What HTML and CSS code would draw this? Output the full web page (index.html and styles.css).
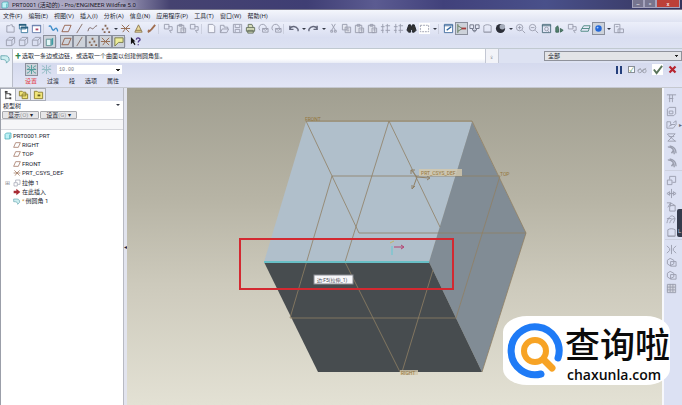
FILE: index.html
```html
<!DOCTYPE html>
<html lang="zh-CN">
<head>
    <meta charset="UTF-8">
    <meta name="viewport" content="width=device-width, initial-scale=1.0">
    <title>PRT0001 (活动的) - Pro/ENGINEER Wildfire 5.0</title>
    <link rel="stylesheet" href="styles.css">
</head>
<body>
    <svg class="sprite" aria-hidden="true">
        <symbol id="new" viewBox="0 0 12 12"><path d="M2 10V3h3l1-1h2v2h2v6z"/></symbol>
        <symbol id="window" viewBox="0 0 12 12"><path fill="#fff" stroke="#3c789c" d="M1.500 1.500h7v5h-7zM3.500 4.500h7v6h-7z"/><path fill="none" stroke="#2a6080" stroke-width="2" d="M1 2h8M3 5h8"/></symbol>
        <symbol id="close-win" viewBox="0 0 12 12"><path fill="#fff" stroke="#647aa8" d="M1.500 2.500h9v8h-9zM1 3h10"/><path stroke="#b04a6a" stroke-width="2" d="M5 7h3"/></symbol>
        <symbol id="sketch" viewBox="0 0 12 12"><path stroke="#3c8cc8" stroke-width="1.500" d="M1 4c3-4 3 7 6 3s3 2 4 2"/></symbol>
        <symbol id="plane" viewBox="0 0 12 12"><path stroke="#94604c" d="M1 9.500L4 2.500h7l-3 7z"/></symbol>
        <symbol id="axis" viewBox="0 0 12 12"><path stroke="#846c64" d="M3 11L9 1"/></symbol>
        <symbol id="curve" viewBox="0 0 12 12"><path stroke="#786460" d="M1 9c2-8 4-1 6-3s2-3 4-3"/></symbol>
        <symbol id="points" viewBox="0 0 12 12"><path stroke="#846450" stroke-width="2" d="M5 3h2M2 7h2M7 6h2M4 10h2M9 10h2"/></symbol>
        <symbol id="csys" viewBox="0 0 12 12"><path stroke="#94684c" d="M2 2l4 4 4-4M6 6H1M6 6l4 4M3 10l3-4h5"/></symbol>
        <symbol id="cone" viewBox="0 0 12 12"><path fill="#eadb9c" stroke="#8c7850" d="M6 2l4 8H2zM3 8h6"/></symbol>
        <symbol id="brush" viewBox="0 0 12 12"><path stroke="#a06e50" stroke-width="2" d="M2 10l4-3 4-5M2 8l3 1"/></symbol>
        <symbol id="copygeom" viewBox="0 0 12 12"><path d="M1.500 1.500h5v5h-5zM6 4h4v4H7M7 8l2 3"/></symbol>
        <symbol id="page" viewBox="0 0 12 12"><path fill="#f4f5fb" d="M2.500 1.500h5l2 2v7h-7z"/></symbol>
        <symbol id="folder" viewBox="0 0 12 12"><path d="M1.500 10.500v-8h4v2h4v2M1.500 10.500l2-4h7l-2 4z"/></symbol>
        <symbol id="save" viewBox="0 0 12 12"><path d="M1.500 1.500h9v9h-9zM3.500 2v3h5V2M3.500 10V7h5v3"/></symbol>
        <symbol id="print" viewBox="0 0 12 12"><path fill="#d9dfbe" stroke="#65715e" d="M3.500 5V1.500h4L9 5M1.500 5h9v4h-9zM3 8h6v3H3z"/></symbol>
        <symbol id="mail" viewBox="0 0 12 12"><path d="M2 8a4 4 0 1 1 7-2M5 6h6v4H5zM5 6l3 2 3-2"/></symbol>
        <symbol id="undo" viewBox="0 0 12 12"><path stroke="#64687c" stroke-width="1.500" d="M2 3v4h4M2 6c2-3 7-3 9 1v2"/></symbol>
        <symbol id="redo" viewBox="0 0 12 12"><path stroke="#64687c" stroke-width="1.500" d="M10 3v4H6M10 6c-2-3-7-3-9 1v2"/></symbol>
        <symbol id="cut" viewBox="0 0 12 12"><path d="M4 1l4 7M8 1L4 8M3 8h2v2H3zM7 8h2v2H7z"/></symbol>
        <symbol id="copy" viewBox="0 0 12 12"><path fill="#e6e8f1" d="M1.500 1.500h5v6h-5zM4.500 4.500h6v6h-6zM6 6.500h3M6 8.500h3"/></symbol>
        <symbol id="paste" viewBox="0 0 12 12"><path fill="#e1e4ee" d="M1.500 2.500h7v8h-7zM3.500 1.500h3v2h-3zM5.500 5.500h5v5h-5zM7 7.500h2"/></symbol>
        <symbol id="regen" viewBox="0 0 12 12"><path d="M3 1v10M8 1v10M1 4h4M6 3h5M1 8h3M6 8h5"/></symbol>
        <symbol id="find" viewBox="0 0 12 12"><path fill="#333" stroke="#20242c" d="M3 2h2l1 3 1-3h2l2 6-2 2H7V7H5v3H3L1 8z"/></symbol>
        <symbol id="select" viewBox="0 0 12 12"><path fill="#fff" stroke="none" d="M0 0h12v12H0z"/><path stroke-dasharray="2 1" d="M1.500 2.500h9v7h-9z"/></symbol>
        <symbol id="repaint" viewBox="0 0 12 12"><path fill="#fff" stroke="#416b9c" d="M1.500 1.500h9v9h-9zM1 3h10"/><path stroke="#2c65a0" stroke-width="1.500" d="M4 8l5-4"/></symbol>
        <symbol id="spin" viewBox="0 0 12 12"><path stroke="#607c5c" d="M2 1v10M2 3l5 3-5 3"/><path stroke="#a43c3c" stroke-width="2" d="M6 6h5"/></symbol>
        <symbol id="orient" viewBox="0 0 12 12"><path stroke="#6f7485" d="M1 2h4v4H1zM7 2h4v4H7zM3 6l3 4 3-4M4 8h4"/></symbol>
        <symbol id="shade" viewBox="0 0 12 12"><circle cx="6" cy="6" r="5" fill="#2b2e38" stroke="none"/><circle cx="8" cy="4" r="3" fill="#a6adbb" stroke="none"/></symbol>
        <symbol id="zoomin" viewBox="0 0 12 12"><circle cx="5" cy="5" r="3.500"/><path d="M3 5h4M5 3v4M8 8l3 3"/></symbol>
        <symbol id="zoomout" viewBox="0 0 12 12"><circle cx="5" cy="5" r="3.500"/><path d="M3 5h4M8 8l3 3"/></symbol>
        <symbol id="refit" viewBox="0 0 12 12"><path stroke="#4b6c7c" d="M1.500 1.500h9v9h-9zM1 3h10"/><circle cx="6" cy="6.500" r="2"/><path d="M7 8l2 2"/></symbol>
        <symbol id="reorient" viewBox="0 0 12 12"><path fill="#52836f" stroke="#3e6657" d="M2 10V5l2-2 1 3v4zM7 6l3 2-3 2z"/></symbol>
        <symbol id="layers" viewBox="0 0 12 12"><path stroke="#4c8880" d="M1 8l3-5h7l-2 6H1zM2 6h8"/></symbol>
        <symbol id="ball" viewBox="0 0 12 12"><circle cx="6" cy="6" r="3.500" fill="#2468d8" stroke="none"/><circle cx="5" cy="5" r="1" fill="#a7ccff" stroke="none"/></symbol>
        <symbol id="viewmgr" viewBox="0 0 12 12"><path d="M1.500 1.500h6v9h-6zM5.500 6.500h6v4h-6zM3 4h3"/></symbol>
        <symbol id="cube" viewBox="0 0 12 12"><path d="M1.500 4.500h6v6h-6zM1.500 4.500l3-3h6v6l-3 3M7.500 4.500l3-3"/></symbol>
        <symbol id="solid" viewBox="0 0 12 12"><path fill="#e2f6f6" stroke="#5c9094" d="M2.500 3.500h5v7h-5z"/><path fill="#3c9ba2" stroke="none" d="M8 3l2-1v7l-2 2z"/></symbol>
        <symbol id="tag" viewBox="0 0 12 12"><path fill="#eded9a" stroke="#76784d" d="M2 2h9v5H6l-4 4z"/></symbol>
        <symbol id="help" viewBox="0 0 12 12"><path fill="#111" stroke="none" d="M1 1v8l2-2 2 3 1-1-2-3h2z"/><path stroke="#523c8c" stroke-width="1.500" d="M7 4c0-3 4-2 4 0 0 1-2 1-2 3M9 9v1"/></symbol>
        <symbol id="mesh" viewBox="0 0 12 12"><path stroke="#4a9a98" d="M1 2c4 1 4 3 0 4M11 2c-4 1-4 3 0 4M1 10c3 0 3-4 5-4s2 4 5 4M6 1v10M1 6h10"/></symbol>
        <symbol id="tree" viewBox="0 0 12 12"><path stroke="#444" d="M3 1v9M3 4h5M3 9h5"/><path stroke="#444" stroke-width="2" d="M2 2h3M7 5h2M7 9h2"/></symbol>
        <symbol id="files" viewBox="0 0 12 12"><path fill="#f0e478" stroke="#8d8030" d="M1.500 2.500h3l1 1h3v4h-7zM4.500 5.500h6v5h-6z"/></symbol>
        <symbol id="fav" viewBox="0 0 12 12"><path fill="#f0e478" stroke="#8d8030" d="M1.500 2.500h3l1 1h5v7h-9z"/><path stroke="#66601c" stroke-width="2" d="M5 7h3"/></symbol>
        <symbol id="part" viewBox="0 0 12 12"><path fill="#bdf1f5" stroke="#3aa4b0" d="M1.500 3.500l2-2h7v7l-2 2h-7z"/><path stroke="#3aa4b0" d="M8.500 4v6"/></symbol>
        <symbol id="insert" viewBox="0 0 12 12"><path fill="#a82c34" stroke="none" d="M1 4h4V1l6 5-6 5V8H1z"/></symbol>
        <symbol id="round" viewBox="0 0 12 12"><path fill="#cdeef0" stroke="#67a6b0" d="M1 3h5c3 0 4 2 4 5l-3 3c0-3-1-4-6-4z"/></symbol>
        <symbol id="hole" viewBox="0 0 12 12"><path d="M1 2h10M4 2v8M7 2v8M3 6h5"/></symbol>
        <symbol id="shell" viewBox="0 0 12 12"><path d="M1.500 3.500l2-2h7v7l-2 2h-7zM3.500 5.500h4v3h-4z"/></symbol>
        <symbol id="rib" viewBox="0 0 12 12"><path d="M1 3h4v3h5M1 3v7h7l3-4V2L8 4M3 8l4-2"/></symbol>
        <symbol id="draft" viewBox="0 0 12 12"><path d="M1 2l9 8M10 2l-8 8M2 2h8M2 10h9M3 5h6"/></symbol>
        <symbol id="fillet" viewBox="0 0 12 12"><path stroke-width="1.500" d="M2 2c5 0 7 3 7 8M4 1c5 1 7 4 7 8M8 6l-2 3"/></symbol>
        <symbol id="extrude" viewBox="0 0 12 12"><path d="M1.500 5.500h5v5h-5zM4 5V1.500h6.500V8H7"/></symbol>
        <symbol id="revolve" viewBox="0 0 12 12"><path d="M6 1v10M1 6l3-2v4zM11 6L8 4v4zM3 6h6"/></symbol>
        <symbol id="sweep" viewBox="0 0 12 12"><path d="M1 2h4v4M4 5h6v6H4zM2 7l3-5 5 3"/></symbol>
        <symbol id="blend" viewBox="0 0 12 12"><path d="M1 10c1-5 3-8 6-8l3 2M4 10c1-3 2-5 6-5M8 10l2-5M1 5h5"/></symbol>
        <symbol id="style" viewBox="0 0 12 12"><path d="M2 10V3c3-2 6-1 8 0v7zM2 10h8"/></symbol>
        <symbol id="mirror" viewBox="0 0 12 12"><path d="M6 1v10M1 2l3 3v2l-3 3M11 2L8 5v2l3 3"/></symbol>
        <symbol id="merge" viewBox="0 0 12 12"><path d="M1.500 3.500l3-2 4 2v4l-4 2-3-2zM5 5h6v5H5z"/></symbol>
        <symbol id="pattern" viewBox="0 0 12 12"><path fill="#d5d7e0" d="M1.500 1.500h9v9h-9zM1 4.500h9M1 7.500h9M4.500 1v9M7.500 1v9"/></symbol>
    </svg>

    <header class="titlebar">
        <svg class="icon"><use href="#part"/></svg>
        <span class="title">PRT0001 (活动的) - Pro/ENGINEER Wildfire 5.0</span>
        <div class="window-buttons">
            <button aria-label="最小化">–</button>
            <button aria-label="最大化">▫</button>
            <button class="close" aria-label="关闭">x</button>
        </div>
    </header>

    <nav class="menu">
        <a href="#">文件(F)</a>
        <a href="#">编辑(E)</a>
        <a href="#">视图(V)</a>
        <a href="#">插入(I)</a>
        <a href="#">分析(A)</a>
        <a href="#">信息(N)</a>
        <a href="#">应用程序(P)</a>
        <a href="#">工具(T)</a>
        <a href="#">窗口(W)</a>
        <a href="#">帮助(H)</a>
    </nav>

    <div class="toolbars">
        <div class="toolbar">
            <button class="tool" aria-label="新窗口"><svg class="icon"><use href="#new"/></svg></button>
            <button class="tool" aria-label="激活"><svg class="icon"><use href="#window"/></svg></button>
            <button class="tool" aria-label="关闭窗口"><svg class="icon"><use href="#close-win"/></svg></button>
            <span class="sep"></span>
            <button class="tool" aria-label="草绘"><svg class="icon"><use href="#sketch"/></svg></button>
            <button class="tool" aria-label="平面"><svg class="icon"><use href="#plane"/></svg></button>
            <button class="tool" aria-label="轴"><svg class="icon"><use href="#axis"/></svg></button>
            <button class="tool" aria-label="曲线"><svg class="icon"><use href="#curve"/></svg></button>
            <button class="tool" aria-label="点"><svg class="icon"><use href="#points"/></svg></button>
            <button class="drop" aria-label="更多点"></button>
            <button class="tool" aria-label="坐标系"><svg class="icon"><use href="#csys"/></svg></button>
            <button class="tool" aria-label="分析"><svg class="icon"><use href="#cone"/></svg></button>
            <button class="tool" aria-label="注释"><svg class="icon"><use href="#brush"/></svg></button>
            <span class="sep"></span>
            <button class="tool" aria-label="复制几何"><svg class="icon"><use href="#copygeom"/></svg></button>
            <button class="tool" aria-label="发布几何"><svg class="icon"><use href="#paste"/></svg></button>
            <button class="tool" aria-label="收缩几何"><svg class="icon"><use href="#copygeom"/></svg></button>
            <span class="sep"></span>
            <button class="tool" aria-label="新建"><svg class="icon"><use href="#page"/></svg></button>
            <button class="tool" aria-label="打开"><svg class="icon"><use href="#folder"/></svg></button>
            <button class="tool" aria-label="保存"><svg class="icon"><use href="#save"/></svg></button>
            <button class="tool" aria-label="打印"><svg class="icon"><use href="#print"/></svg></button>
            <button class="tool" aria-label="发送"><svg class="icon"><use href="#mail"/></svg></button>
            <button class="tool" aria-label="发送链接"><svg class="icon"><use href="#mail"/></svg></button>
            <span class="sep"></span>
            <button class="tool" aria-label="撤消"><svg class="icon"><use href="#undo"/></svg></button>
            <button class="drop" aria-label="撤消列表"></button>
            <button class="tool" aria-label="重做"><svg class="icon"><use href="#redo"/></svg></button>
            <button class="drop" aria-label="重做列表"></button>
            <button class="tool" aria-label="剪切"><svg class="icon"><use href="#cut"/></svg></button>
            <button class="tool" aria-label="复制"><svg class="icon"><use href="#copy"/></svg></button>
            <button class="tool" aria-label="粘贴"><svg class="icon"><use href="#paste"/></svg></button>
            <button class="tool" aria-label="选择性粘贴"><svg class="icon"><use href="#paste"/></svg></button>
            <button class="tool" aria-label="再生"><svg class="icon"><use href="#regen"/></svg></button>
            <button class="tool" aria-label="再生管理器"><svg class="icon"><use href="#regen"/></svg></button>
            <button class="tool" aria-label="查找"><svg class="icon"><use href="#find"/></svg></button>
            <button class="tool" aria-label="选取"><svg class="icon"><use href="#select"/></svg></button>
            <button class="drop" aria-label="选取方式"></button>
            <span class="sep"></span>
            <button class="tool" aria-label="重画"><svg class="icon"><use href="#repaint"/></svg></button>
            <button class="tool active" aria-label="旋转中心"><svg class="icon"><use href="#spin"/></svg></button>
            <button class="tool" aria-label="定向模式"><svg class="icon"><use href="#orient"/></svg></button>
            <button class="tool" aria-label="上一视图"><svg class="icon"><use href="#style"/></svg></button>
            <button class="tool" aria-label="外观"><svg class="icon"><use href="#shade"/></svg></button>
            <button class="drop" aria-label="外观库"></button>
            <button class="tool" aria-label="放大"><svg class="icon"><use href="#zoomin"/></svg></button>
            <button class="tool" aria-label="缩小"><svg class="icon"><use href="#zoomout"/></svg></button>
            <button class="tool" aria-label="重新调整"><svg class="icon"><use href="#refit"/></svg></button>
            <button class="tool" aria-label="重定向"><svg class="icon"><use href="#reorient"/></svg></button>
            <button class="tool" aria-label="视图列表"><svg class="icon"><use href="#copygeom"/></svg></button>
            <button class="tool" aria-label="层"><svg class="icon"><use href="#layers"/></svg></button>
            <button class="tool active" aria-label="着色"><svg class="icon"><use href="#ball"/></svg></button>
            <button class="drop" aria-label="显示样式"></button>
            <button class="tool" aria-label="视图管理器"><svg class="icon"><use href="#viewmgr"/></svg></button>
        </div>
        <div class="toolbar">
            <button class="tool" aria-label="线框"><svg class="icon"><use href="#cube"/></svg></button>
            <button class="tool" aria-label="隐藏线"><svg class="icon"><use href="#cube"/></svg></button>
            <button class="tool" aria-label="消隐"><svg class="icon"><use href="#cube"/></svg></button>
            <button class="tool active" aria-label="着色显示"><svg class="icon"><use href="#solid"/></svg></button>
            <span class="sep"></span>
            <button class="tool active" aria-label="平面显示"><svg class="icon"><use href="#plane"/></svg></button>
            <button class="tool active" aria-label="轴显示"><svg class="icon"><use href="#axis"/></svg></button>
            <button class="tool active" aria-label="点显示"><svg class="icon"><use href="#points"/></svg></button>
            <button class="tool active" aria-label="坐标系显示"><svg class="icon"><use href="#csys"/></svg></button>
            <button class="tool active" aria-label="注释显示"><svg class="icon"><use href="#tag"/></svg></button>
            <span class="sep"></span>
            <button class="tool" aria-label="帮助"><svg class="icon"><use href="#help"/></svg></button>
        </div>
    </div>

    <section class="dashboard">
        <div class="feature"><svg class="icon"><use href="#round"/></svg></div>
        <div class="dash-body">
            <div class="message-row">
                <p class="message"><span class="plus">✚</span>选取一条边或边链，或选取一个曲面以创建倒圆角集。</p>
                <span class="lamp">⍚</span>
                <select class="filter" aria-label="过滤器"><option>全部</option></select>
            </div>
            <div class="dash-row">
                <div class="dash-left">
                    <div class="values">
                        <button class="tool active" aria-label="集模式"><svg class="icon"><use href="#mesh"/></svg></button>
                        <button class="tool dim" aria-label="过渡模式"><svg class="icon"><use href="#mesh"/></svg></button>
                        <select class="radius" aria-label="半径"><option>10.00</option></select>
                    </div>
                    <div class="tabs">
                        <a class="current" href="#">设置</a>
                        <a href="#">过渡</a>
                        <a href="#">段</a>
                        <a href="#">选项</a>
                        <a href="#">属性</a>
                    </div>
                </div>
                <div class="actions">
                    <button class="pause" aria-label="暂停"></button>
                    <label class="preview"><input type="checkbox" checked>
                        <svg class="glasses" viewBox="0 0 12 8" aria-label="预览"><path d="M1 5l3-3M6 5l4-3M5 5h2"/><circle cx="3" cy="5" r="2"/><circle cx="8" cy="5" r="2"/></svg>
                    </label>
                    <button class="ok" aria-label="确定"><svg class="icon" viewBox="0 0 12 12"><path d="M2 6l3 4 6-8"/></svg></button>
                    <button class="cancel" aria-label="取消"><svg class="icon" viewBox="0 0 12 12"><path d="M2 2l8 8M10 2l-8 8"/></svg></button>
                </div>
            </div>
        </div>
    </section>

    <main class="workspace">
        <aside class="navigator">
            <div class="nav-tabs">
                <button class="selected" aria-label="模型树"><svg class="icon"><use href="#tree"/></svg></button>
                <button aria-label="文件夹"><svg class="icon"><use href="#files"/></svg></button>
                <button aria-label="收藏夹"><svg class="icon"><use href="#fav"/></svg></button>
            </div>
            <div class="nav-head"><span>模型树</span><button class="drop" aria-label="折叠"></button></div>
            <div class="nav-buttons">
                <button>显示<em>(O)</em> ▾</button>
                <button>设置<em>(G)</em> ▾</button>
            </div>
            <div class="column-head"></div>
            <ul class="tree">
                <li class="root"><svg class="icon"><use href="#part"/></svg>PRT0001.PRT</li>
                <li><svg class="icon"><use href="#plane"/></svg>RIGHT</li>
                <li><svg class="icon"><use href="#plane"/></svg>TOP</li>
                <li><svg class="icon"><use href="#plane"/></svg>FRONT</li>
                <li><svg class="icon"><use href="#csys"/></svg>PRT_CSYS_DEF</li>
                <li class="parent"><span class="expand">⊞</span><svg class="icon"><use href="#extrude"/></svg>拉伸 1</li>
                <li><svg class="icon"><use href="#insert"/></svg>在此插入</li>
                <li><svg class="icon"><use href="#round"/></svg><span class="star">*</span>倒圆角 1</li>
            </ul>
        </aside>
        <div class="splitter"><span>◂</span></div>

        <div class="viewport">
            <svg class="model" viewBox="127 88 535 317">
                <path fill="#b0bfcb" d="M306 122h166l-43 140H264z"/>
                <path fill="#818c95" d="M472 122l54 111-44 139-53-110z"/>
                <path fill="#474c4f" d="M264 262h165l53 110H318z"/>
                <!-- datum planes -->
                <g class="datum">
                    <path d="M306 121h166l54 112H359z"/>
                    <path d="M389 121l51 106M389 121l-44 141 55 110"/>
                    <path d="M500 176H332l-42 142h166z"/>
                    <path d="M433 270l-31 102M526 233l-44 139"/>
                </g>
                <path class="edge" d="M264 262h165"/>
                <g class="axes">
                    <path d="M417 177l-6-7M417 177l12 1M417 177l-4 11M411 174v-4h4M427 176l3 2-3 2M412 185v4l3-3"/>
                </g>
                <g class="spin">
                    <path stroke="#c0b864" d="M390 243l4-2"/>
                    <path stroke="#63c9d2" d="M392 246v9"/>
                    <path stroke="#b54070" d="M394 247h9M401 245l3 2-3 2"/>
                </g>
                <rect class="label-box" x="419" y="169" width="43" height="7"/>
                <rect class="label-box" x="400" y="370" width="18" height="5"/>
                <text x="305" y="121">FRONT</text>
                <text x="500" y="176">TOP</text>
                <text x="421" y="175">PRT_CSYS_DEF</text>
                <text x="401" y="375">RIGHT</text>
                <rect class="highlight" x="240" y="239" width="213" height="50"/>
                <rect class="tip-box" x="314" y="275" width="39" height="9"/>
                <text class="tip" x="317" y="282">边:F5(拉伸_1)</text>
            </svg>
        </div>

        <div class="feature-bar">
            <button class="tool" aria-label="孔"><svg class="icon"><use href="#hole"/></svg></button>
            <button class="tool" aria-label="壳"><svg class="icon"><use href="#shell"/></svg></button>
            <div class="with-drop">
                <button class="tool" aria-label="筋"><svg class="icon"><use href="#rib"/></svg></button>
                <button class="fly" aria-label="更多筋">▸</button>
            </div>
            <button class="tool" aria-label="拔模"><svg class="icon"><use href="#draft"/></svg></button>
            <button class="tool" aria-label="倒圆角"><svg class="icon"><use href="#fillet"/></svg></button>
            <button class="tool" aria-label="倒角"><svg class="icon"><use href="#fillet"/></svg></button>
            <span class="rule"></span>
            <button class="tool" aria-label="拉伸"><svg class="icon"><use href="#extrude"/></svg></button>
            <button class="tool" aria-label="旋转"><svg class="icon"><use href="#revolve"/></svg></button>
            <button class="tool" aria-label="扫描"><svg class="icon"><use href="#sweep"/></svg></button>
            <button class="tool" aria-label="混合"><svg class="icon"><use href="#blend"/></svg></button>
            <button class="tool" aria-label="造型"><svg class="icon"><use href="#style"/></svg></button>
            <span class="rule"></span>
            <button class="tool" aria-label="镜像"><svg class="icon"><use href="#mirror"/></svg></button>
            <button class="tool" aria-label="合并"><svg class="icon"><use href="#merge"/></svg></button>
            <button class="tool" aria-label="修剪"><svg class="icon"><use href="#merge"/></svg></button>
            <button class="tool" aria-label="阵列"><svg class="icon"><use href="#pattern"/></svg></button>
        </div>
        <div class="side-handle">L</div>

        <a class="brand" href="#">
            <svg class="brand-mark" viewBox="0 0 56 56">
                <path stroke="#1f7bf6" stroke-width="7" d="M51 35a24 24 0 1 0-17 16"/>
                <circle cx="28" cy="28" r="11" stroke="#f7a325" stroke-width="6"/>
                <path stroke="#f7a325" stroke-width="7" d="M37 37l8 8"/>
            </svg>
            <span class="brand-text">
                <strong>查询啦</strong>
                <span>chaxunla.com</span>
            </span>
        </a>
    </main>
</body>
</html>
```
FILE: styles.css
```css
* {
    box-sizing: border-box;
}

body {
    margin: 0;
    height: 100vh;
    display: flex;
    flex-direction: column;
    overflow: hidden;
    font-family: Roboto, "Noto Sans CJK SC", sans-serif;
    font-size: 6px;
    line-height: 8px;
    color: #222530;
    background: #dde1f1;
}

button,
select,
input {
    margin: 0;
    padding: 0;
    border: 0;
    border-radius: 0;
    background: none;
    font: inherit;
    color: inherit;
}

a {
    color: inherit;
    text-decoration: none;
}

.sprite {
    display: none;
}

.icon {
    display: block;
    flex: none;
    width: 11px;
    height: 11px;
    fill: none;
    stroke: #9a9eae;
}

/* title bar and menu */
.titlebar {
    flex: none;
    display: flex;
    align-items: center;
    gap: 3px;
    height: 10px;
    padding-left: 1px;
    border-bottom: 1px solid #77758b;
    background: linear-gradient(90deg, #b3afc9 0, #9f9cba 120px, #454270 170px, #3f3e74 45%, #5b5b91 55%, #41417b 65%, #49508a 80%, #35345c 100%);
}

.titlebar .icon {
    width: 8px;
    height: 8px;
}

.title {
    font-size: 6px;
    color: #15141f;
    white-space: nowrap;
    text-shadow: 0 0 3px #d5cfe0;
}

.window-buttons {
    display: flex;
    align-self: flex-start;
    margin-left: auto;
    margin-right: 2px;
    color: #fff;
}

.window-buttons button {
    width: 12px;
    height: 8px;
    line-height: 7px;
    border: 1px solid #a5a3bd;
    border-top: 0;
    background: #77758f;
}

.window-buttons .close {
    width: 24px;
    background: #bc4038;
}

.menu {
    flex: none;
    display: flex;
    align-items: center;
    gap: 6px;
    height: 12px;
    padding-left: 3px;
    background: linear-gradient(#f4f6fc, #dfe3f2);
    white-space: nowrap;
}

/* toolbars */
.toolbars {
    flex: none;
    padding: 0 4px;
    border-bottom: 1px solid #c0c9d0;
    background: linear-gradient(#eceffa, #d9def1 60%, #dde2f2);
}

.toolbar {
    display: flex;
    align-items: center;
    height: 13px;
}

.tool {
    flex: none;
    display: grid;
    place-items: center;
    width: 13px;
    height: 13px;
}

.tool.active {
    border: 1px solid #8a8f9c;
    background: #cdd2da;
}

.tool.dim {
    opacity: 0.5;
}

.sep {
    width: 4px;
    height: 10px;
    border-left: 1px solid #ccd0df;
}

.drop {
    display: grid;
    place-items: center;
    width: 7px;
    height: 8px;
}

.drop::before {
    content: "";
    border: 2px solid transparent;
    border-top-color: #343844;
    border-bottom: 0;
}

/* feature dashboard */
.dashboard {
    flex: none;
    display: flex;
    height: 39px;
    border-bottom: 1px solid #c5c8cf;
}

.feature {
    width: 13px;
    padding-top: 4px;
    border-right: 1px solid #b9bdc9;
    background: #edf0f8;
}

.dash-body {
    flex: 1;
    display: flex;
    flex-direction: column;
}

.message-row {
    display: flex;
    align-items: center;
    height: 14px;
    background: #dde2f2;
}

.message {
    flex: 1;
    margin: 0;
    padding: 0 2px;
    line-height: 14px;
    font-size: 6px;
    background: linear-gradient(#fff 70%, #e9ecf6);
}

.plus {
    margin-right: 1px;
    color: #2c8350;
}

.lamp {
    width: 14px;
    line-height: 14px;
    text-align: center;
    color: #777b86;
    border: 1px solid #c3c7d3;
    border-width: 0 1px;
    background: #f2f3f8;
}

select {
    appearance: none;
    background-image: linear-gradient(45deg, transparent 50%, #222 50%), linear-gradient(-45deg, transparent 50%, #222 50%);
    background-size: 2px 2px;
    background-position: right 4px center, right 2px center;
    background-repeat: no-repeat;
}

.filter {
    width: 138px;
    height: 10px;
    margin-left: 45px;
    padding-left: 3px;
    border: 1px solid #8f929b;
    background-color: #e3e4e7;
}

.dash-row {
    flex: 1;
    display: flex;
    justify-content: space-between;
    background: linear-gradient(#d5daee, #e2e5f5);
}

.dash-left {
    padding-left: 12px;
}

.values {
    display: flex;
    align-items: center;
    gap: 2px;
}

.radius {
    width: 65px;
    height: 9px;
    margin-left: 2px;
    padding-left: 2px;
    font-family: "Liberation Mono", monospace;
    font-size: 5px;
    color: #747882;
    background-color: #fff;
}

.tabs {
    display: flex;
    gap: 10px;
    line-height: 10px;
}

.tabs .current {
    color: #e23b40;
}

.actions {
    display: flex;
    align-items: center;
    gap: 4px;
    height: 13px;
    padding-right: 4px;
}

.pause {
    width: 6px;
    height: 8px;
    margin-right: 2px;
    border: 2px solid #25407c;
    border-width: 0 2px;
}

.preview {
    display: flex;
    align-items: center;
    gap: 2px;
}

.preview input {
    appearance: none;
    display: grid;
    place-items: center;
    width: 7px;
    height: 7px;
    border: 1px solid #888e97;
    background: #fff;
}

.preview input:checked::before {
    content: "✓";
    line-height: 6px;
    color: #398445;
}

.glasses {
    width: 11px;
    height: 8px;
    fill: none;
    stroke: #a0a3af;
}

.ok,
.cancel {
    display: grid;
    place-items: center;
    width: 11px;
    height: 11px;
}

.ok {
    background: #fff;
}

.ok .icon {
    stroke: #59745a;
    stroke-width: 2;
}

.cancel .icon {
    width: 9px;
    height: 9px;
    stroke: #b72530;
    stroke-width: 3;
}

/* work area */
.workspace {
    position: relative;
    flex: 1;
    display: flex;
    min-height: 0;
}

.navigator {
    flex: none;
    width: 123px;
    border-left: 1px solid #9b9fa9;
    background: #fff;
}

.nav-tabs {
    display: flex;
    height: 13px;
    background: #dde1ef;
}

.nav-tabs button {
    display: grid;
    place-items: center;
    width: 15px;
    border: 1px solid #a9adb8;
    border-left: 0;
    background: #e8e9ee;
}

.nav-tabs .selected {
    border-bottom: 0;
    background: #fff;
}

.nav-head {
    display: flex;
    justify-content: space-between;
    height: 10px;
    padding: 0 2px;
    line-height: 10px;
}

.nav-buttons {
    display: flex;
    gap: 1px;
    padding-left: 1px;
}

.nav-buttons button {
    width: 37px;
    height: 8px;
    line-height: 6px;
    border: 1px solid #a8a9ad;
    border-radius: 1px;
    background: #e6e6e8;
}

.nav-buttons em {
    font-style: normal;
    color: #93959b;
}

.column-head {
    height: 11px;
    border: 1px solid #d7d8dd;
    border-width: 1px 0;
    background: #f6f6f8;
}

.tree {
    display: grid;
    grid-auto-rows: 1fr;
    height: 76px;
    margin: 0;
    padding: 1px 0 0 12px;
    list-style: none;
    white-space: nowrap;
}

.tree li {
    display: flex;
    align-items: center;
    gap: 1px;
}

.tree .root {
    margin-left: -9px;
}

.tree .parent {
    margin-left: -8px;
}

.tree .icon {
    width: 8px;
    height: 8px;
}

.expand {
    width: 7px;
    color: #8a8d95;
}

.star {
    color: #c4862e;
}

.splitter {
    flex: none;
    display: grid;
    place-items: center;
    width: 4px;
    overflow: hidden;
    border-left: 1px solid #b8bac3;
    background: #e2e4ee;
}

.viewport {
    flex: 1;
    min-width: 0;
    background: linear-gradient(#a19f91, #b7b4a5 35%, #cdcabc 62%, #e3e1d4);
}

.model {
    display: block;
    width: 100%;
    height: 100%;
    font-size: 5px;
    fill: #94763c;
}

.datum,
.axes {
    fill: none;
    stroke: #908064;
}

.datum {
    stroke-opacity: 0.8;
}

.edge {
    stroke: #68bfc6;
    stroke-width: 2;
}

.spin {
    fill: none;
}

.label-box {
    fill: #d4c9ac;
    fill-opacity: 0.8;
}

.highlight {
    fill: none;
    stroke: #d32931;
    stroke-width: 2;
}

.tip-box {
    fill: #f7f7fa;
    stroke: #8a8c93;
}

.tip {
    fill: #4a4b55;
}

.feature-bar {
    flex: none;
    width: 20px;
    padding: 4px 0 0 1px;
    border-left: 2px solid #f7f8fc;
    background: #dce1f3;
}

.with-drop {
    display: flex;
}

.fly {
    width: 4px;
    color: #676b79;
}

.rule {
    display: block;
    height: 4px;
    border-top: 1px solid #cdd1e0;
}

/* tab that slides out over the right edge */
.side-handle {
    position: absolute;
    top: 121px;
    right: 0;
    width: 5px;
    height: 28px;
    padding: 18px 0 0 1px;
    border-radius: 2px 0 0 2px;
    color: #c5cad7;
    background: #353b4c;
}

/* badge over the model */
.brand {
    position: absolute;
    right: 12px;
    bottom: 20px;
    display: flex;
    align-items: center;
    gap: 2px;
    height: 69px;
    padding-left: 4px;
    border-radius: 24px / 16px;
    color: #0b0b0b;
    background: #fff;
}

.brand-mark {
    width: 56px;
    height: 56px;
    fill: none;
    stroke-linecap: round;
}

.brand-text {
    display: flex;
    flex-direction: column;
}

.brand-text strong {
    font-family: "Noto Sans CJK SC", sans-serif;
    font-size: 35px;
    font-weight: 500;
    line-height: 48px;
}

.brand-text span {
    padding-left: 2px;
    font-family: "Open Sans", sans-serif;
    font-size: 14px;
    font-weight: 600;
    line-height: 16px;
}
```
